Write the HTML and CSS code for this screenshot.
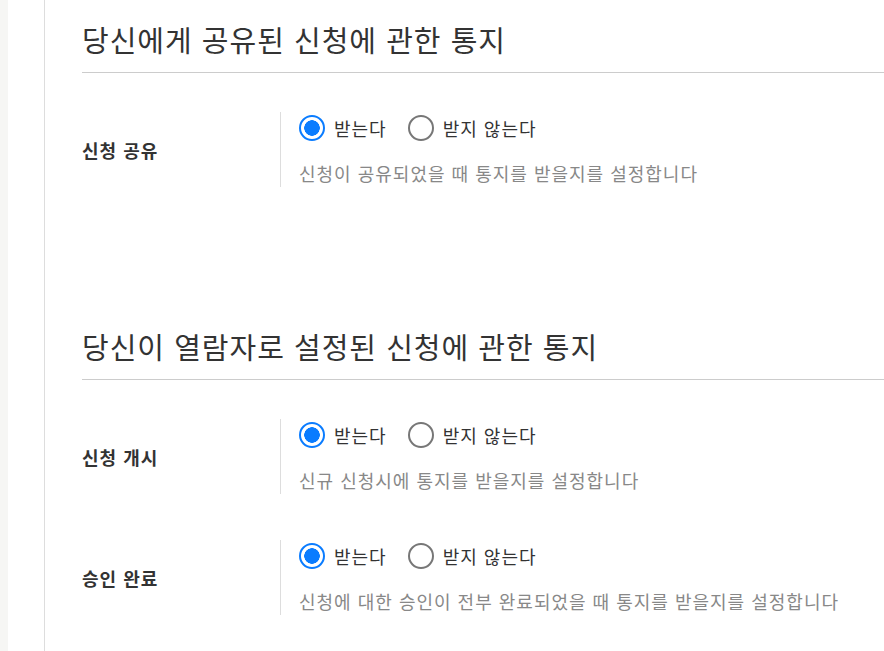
FILE: index.html
```html
<!DOCTYPE html>
<html lang="ko">
<head>
    <meta charset="UTF-8">
    <meta name="viewport" content="width=device-width, initial-scale=1.0">
    <title>알림 설정</title>
    <link rel="stylesheet" href="styles.css">
</head>
<body>
    <div class="side"></div>
    <div class="gutter"></div>
    <div class="main">
        <section class="section">
            <h2>당신에게 공유된 신청에 관한 통지</h2>
            <div class="row">
                <div class="label">신청 공유</div>
                <div class="field">
                    <div class="options">
                        <label class="option"><input type="radio" name="share" checked> 받는다</label>
                        <label class="option"><input type="radio" name="share"> 받지 않는다</label>
                    </div>
                    <p class="desc">신청이 공유되었을 때 통지를 받을지를 설정합니다</p>
                </div>
            </div>
        </section>

        <section class="section">
            <h2>당신이 열람자로 설정된 신청에 관한 통지</h2>
            <div class="row">
                <div class="label">신청 개시</div>
                <div class="field">
                    <div class="options">
                        <label class="option"><input type="radio" name="start" checked> 받는다</label>
                        <label class="option"><input type="radio" name="start"> 받지 않는다</label>
                    </div>
                    <p class="desc">신규 신청시에 통지를 받을지를 설정합니다</p>
                </div>
            </div>
            <div class="row">
                <div class="label">승인 완료</div>
                <div class="field">
                    <div class="options">
                        <label class="option"><input type="radio" name="done" checked> 받는다</label>
                        <label class="option"><input type="radio" name="done"> 받지 않는다</label>
                    </div>
                    <p class="desc">신청에 대한 승인이 전부 완료되었을 때 통지를 받을지를 설정합니다</p>
                </div>
            </div>
        </section>
    </div>
</body>
</html>
```

FILE: styles.css
```css
html, body {
    height: 100%;
}
body {
    margin: 0;
    display: flex;
    font-family: "Noto Sans CJK KR", "Noto Sans", sans-serif;
    color: #333;
    background-color: #fff;
    overflow: hidden;
}
.side {
    width: 8px;
    background-color: #f6f6f4;
}
.gutter {
    width: 36px;
}
.main {
    flex: 1;
    border-left: 1px solid #ddd;
    padding: 23px 0 0 37px;
}
.section + .section {
    margin-top: 143px;
}
h2 {
    margin: 0;
    font-size: 29px;
    font-weight: normal;
    line-height: 32px;
    letter-spacing: 1px;
    padding-bottom: 17px;
    border-bottom: 1px solid #ccc;
}
.row {
    display: flex;
    margin-top: 46px;
}
h2 + .row {
    margin-top: 39px;
}
.label {
    width: 198px;
    display: flex;
    align-items: center;
    font-size: 18px;
    font-weight: bold;
    letter-spacing: 1px;
}
.field {
    border-left: 1px solid #ddd;
    padding: 0 0 1px 18px;
}
.options {
    display: flex;
    gap: 21px;
    height: 32px;
    align-items: center;
}
.option {
    display: flex;
    align-items: center;
    gap: 9px;
    font-size: 18px;
    line-height: 26px;
    letter-spacing: 1px;
    cursor: pointer;
}
.option input {
    appearance: none;
    margin: 0;
    width: 26px;
    height: 26px;
    border: 2px solid #777;
    border-radius: 50%;
    box-sizing: border-box;
}
.option input:checked {
    border-color: #0a7cff;
    background: radial-gradient(circle, #0a7cff 0 7.5px, #fff 8px);
}
.desc {
    margin: 16px 0 0;
    font-size: 18px;
    line-height: 26px;
    color: #888;
    letter-spacing: 1px;
}
```
